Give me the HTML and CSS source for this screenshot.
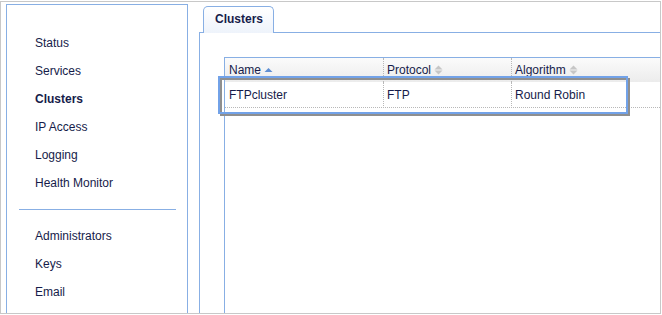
FILE: index.html
```html
<!DOCTYPE html>
<html>
<head>
<meta charset="utf-8">
<link rel="stylesheet" href="styles.css">
</head>
<body>
<div class="frame">
  <nav class="sidebar">
    <ul class="menu">
      <li>Status</li>
      <li>Services</li>
      <li class="active">Clusters</li>
      <li>IP Access</li>
      <li>Logging</li>
      <li>Health Monitor</li>
    </ul>
    <div class="sep"></div>
    <ul class="menu">
      <li>Administrators</li>
      <li>Keys</li>
      <li>Email</li>
    </ul>
  </nav>
  <main class="main">
    <div class="tabs">
      <div class="tab">Clusters</div>
    </div>
    <div class="panel">
      <div class="grid">
        <div class="row head">
          <div class="cell">Name <svg class="sort" width="9" height="10" viewBox="0 0 9 10"><path d="M0.5 7 L4.5 3 L8.5 7 Z" fill="#5f8ed2"/></svg></div>
          <div class="cell">Protocol <svg class="sort" width="9" height="10" viewBox="0 0 9 10"><path d="M0.5 4.5 L4.5 0.5 L8.5 4.5 Z M0.5 5.5 L8.5 5.5 L4.5 9.5 Z" fill="#c6c6c6"/></svg></div>
          <div class="cell">Algorithm <svg class="sort" width="9" height="10" viewBox="0 0 9 10"><path d="M0.5 4.5 L4.5 0.5 L8.5 4.5 Z M0.5 5.5 L8.5 5.5 L4.5 9.5 Z" fill="#c6c6c6"/></svg></div>
        </div>
        <div class="row body">
          <div class="cell">FTPcluster</div>
          <div class="cell">FTP</div>
          <div class="cell">Round Robin</div>
        </div>
        <div class="focus-shadow"></div>
        <div class="focus-ring"></div>
      </div>
    </div>
  </main>
</div>
</body>
</html>
```
FILE: styles.css
```css
* { box-sizing: border-box; }
html, body { margin: 0; padding: 0; background: #fff; }
body {
  font-family: "Liberation Sans", Arial, sans-serif;
  font-size: 12px;
  color: #161c4a;
}
.frame {
  margin-top: 1px;
  width: 661px;
  height: 313px;
  border: 1px solid #c8c8c8;
  display: flex;
  overflow: hidden;
}
.sidebar {
  margin: 2px 0 0 5px;
  width: 182px;
  height: 400px;
  flex: none;
  border: 1px solid #88afe4;
  border-bottom: none;
  padding-top: 24px;
}
.menu { list-style: none; margin: 0; padding: 0; }
.menu li {
  height: 28px;
  line-height: 28px;
  padding-left: 28px;
}
.menu li.active { font-weight: bold; }
.sep {
  height: 1px;
  background: #88afe4;
  margin: 12px 11px 12px 12px;
}
.main {
  flex: 1;
  padding: 4px 0 0 11px;
  display: flex;
  flex-direction: column;
}
.tabs {
  display: flex;
  padding-left: 4px;
  position: relative;
  z-index: 2;
  margin-bottom: -1px;
}
.tab {
  width: 71px;
  height: 27px;
  border: 1px solid #88afe4;
  border-bottom: none;
  border-radius: 5px 5px 0 0;
  background: linear-gradient(#ffffff, #eef3fb);
  font-weight: bold;
  line-height: 25px;
  padding-left: 11px;
}
.panel {
  flex: 1;
  border-left: 1px solid #88afe4;
  border-top: 1px solid #88afe4;
  padding: 24px 0 0 24px;
  display: flex;
}
.grid {
  flex: 1;
  position: relative;
  border-left: 1px solid #88afe4;
  border-top: 1px solid #88afe4;
}
.row {
  display: grid;
  grid-template-columns: 159px 128px 1fr;
}
.row .cell {
  padding-left: 4px;
  border-right: 1px dotted #b8b8b8;
  white-space: nowrap;
}
.row .cell:last-child { border-right: none; }
.head {
  height: 24px;
  line-height: 24px;
  background: linear-gradient(#fbfbfb, #ececec);
}
.head .cell:nth-child(2), .head .cell:nth-child(3) { padding-left: 3px; }
.body {
  height: 26px;
  line-height: 26px;
  border-bottom: 1px dotted #b8b8b8;
}
.body .cell:nth-child(2), .body .cell:nth-child(3) { padding-left: 3px; }
.sort {
  vertical-align: -1px;
}
.focus-ring, .focus-shadow {
  position: absolute;
  left: -7px;
  top: 18px;
  width: 410px;
  height: 38px;
  border: 2px solid #72a2e8;
}
.focus-shadow {
  left: -5px;
  top: 20px;
  border-color: #8f8f8f;
}
```
